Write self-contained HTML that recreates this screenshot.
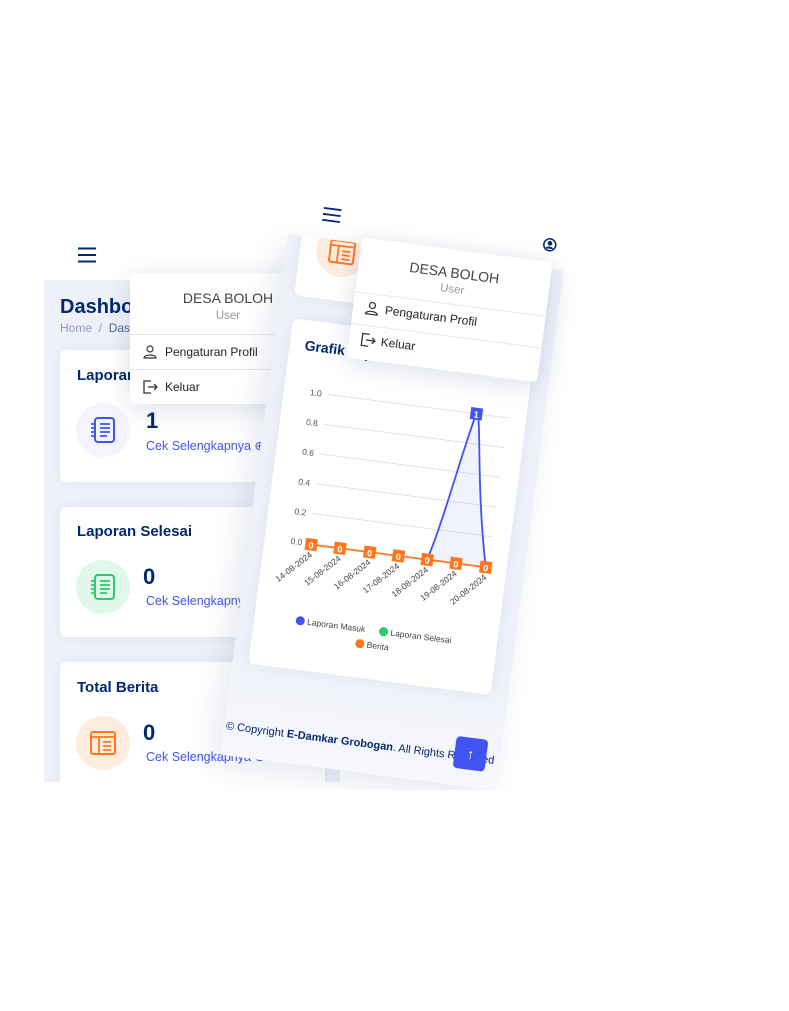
<!DOCTYPE html>
<html><head><meta charset="utf-8"><style>
*{margin:0;padding:0;box-sizing:border-box}
body{width:789px;height:1011px;background:#fff;position:relative;overflow:hidden;font-family:"Liberation Sans",sans-serif}
.abs{position:absolute}
.lp{left:44px;top:280px;width:296px;height:502px;background:#eef1f9}
.card{position:absolute;background:#fff;border-radius:6px;box-shadow:0 0 14px rgba(1,41,112,.06)}
.h5{position:absolute;color:#012970;font-size:15px;font-weight:bold}
.num{position:absolute;color:#012970;font-size:22px;font-weight:bold}
.lnk{position:absolute;color:#4154f1;font-size:12.5px;white-space:nowrap}
.circ{position:absolute;width:54px;height:54px;border-radius:50%}
.dd{position:absolute;background:#fff;border-radius:5px;box-shadow:0 5px 25px rgba(1,41,112,.14)}
.dd .n{position:absolute;width:100%;text-align:center;color:#444;font-size:14px}
.dd .u{position:absolute;width:100%;text-align:center;color:#999;font-size:11.5px}
.dd .hr{position:absolute;left:0;right:0;height:1px;background:#e6e6ee}
.dd .it{position:absolute;color:#222;font-size:12px}
</style></head><body>

<!-- left phone -->
<svg class="abs" style="left:78px;top:247px" width="18" height="16"><path d="M0 1.5H18M0 8H18M0 14.5H18" stroke="#012970" stroke-width="2"/></svg>
<div class="abs lp"></div>
<div class="abs" style="left:60px;top:296px;color:#012970;font-size:20px;font-weight:bold">Dashboard</div>
<div class="abs" style="left:60px;top:321px;color:#899bbd;font-size:12px">Home&nbsp; / &nbsp;<span style="color:#51678f">Dashboard</span></div>

<div class="card" style="left:60px;top:350px;width:265px;height:132px"></div>
<div class="h5" style="left:77px;top:367px">Laporan Masuk</div>
<div class="circ" style="left:76px;top:403px;background:#f3f4fd"></div>
<svg class="abs" style="left:89px;top:416px" width="28" height="28"><rect x="6" y="2" width="19" height="24" rx="3" fill="none" stroke="#4154f1" stroke-width="2"/><path d="M11 8h10M11 12h10M11 16h10M11 20h7M2 8h3M2 12h3M2 16h3M2 20h3" stroke="#4154f1" stroke-width="1.8"/></svg>
<div class="num" style="left:146px;top:408px">1</div>
<div class="lnk" style="left:146px;top:438px">Cek Selengkapnya ⊕</div>

<div class="card" style="left:60px;top:507px;width:265px;height:130px"></div>
<div class="h5" style="left:77px;top:523px">Laporan Selesai</div>
<div class="circ" style="left:76px;top:560px;background:#e0f8e9"></div>
<svg class="abs" style="left:89px;top:573px" width="28" height="28"><rect x="6" y="2" width="19" height="24" rx="3" fill="none" stroke="#2eca6a" stroke-width="2"/><path d="M11 8h10M11 12h10M11 16h10M11 20h7M2 8h3M2 12h3M2 16h3M2 20h3" stroke="#2eca6a" stroke-width="1.8"/></svg>
<div class="num" style="left:143px;top:564px">0</div>
<div class="lnk" style="left:146px;top:594px">Cek Selengkapnya</div>

<div class="card" style="left:60px;top:662px;width:265px;height:130px;border-radius:6px 6px 0 0"></div>
<div class="h5" style="left:77px;top:679px">Total Berita</div>
<div class="circ" style="left:76px;top:716px;background:#ffecdf"></div>
<svg class="abs" style="left:89px;top:729px" width="28" height="28"><rect x="2" y="3" width="24" height="22" rx="2" fill="none" stroke="#ff771d" stroke-width="2"/><path d="M2 8H26M10 8V25M14 13h8M14 17h8M14 21h8" stroke="#ff771d" stroke-width="1.8"/></svg>
<div class="num" style="left:143px;top:720px">0</div>
<div class="lnk" style="left:146px;top:749px">Cek Selengkapnya ⊕</div>
<div class="abs" style="left:0;top:782px;width:789px;height:229px;background:#fff"></div>

<div class="dd" style="left:130px;top:273px;width:160px;height:131px">
 <div class="n" style="top:17px;left:18px;width:160px">DESA BOLOH</div>
 <div class="u" style="top:37px;left:18px;width:160px">User</div>
 <div class="hr" style="top:61px"></div>
 <svg class="abs" style="left:13px;top:72px" width="14" height="14"><circle cx="7" cy="4" r="3" fill="none" stroke="#333" stroke-width="1.2"/><path d="M1 13c0-4 12-4 12 0z" fill="none" stroke="#333" stroke-width="1.2"/></svg>
 <div class="it" style="left:35px;top:72px">Pengaturan Profil</div>
 <div class="hr" style="top:96px"></div>
 <svg class="abs" style="left:12px;top:107px" width="16" height="14"><path d="M9 1H2v12h7M6 7h9M12 4l3 3-3 3" fill="none" stroke="#333" stroke-width="1.3"/></svg>
 <div class="it" style="left:35px;top:107px">Keluar</div>
</div>

<!-- right phone (rotated) -->
<div class="abs" style="left:288px;top:234px;width:0;height:0;transform:rotate(7.4deg);transform-origin:0 0">
 <svg class="abs" style="left:32px;top:-32px" width="18" height="15"><path d="M0 1.5H18M0 7.5H18M0 13.5H18" stroke="#012970" stroke-width="1.8"/></svg>
 <svg class="abs" style="left:254px;top:-30px" width="14" height="14"><circle cx="7" cy="7" r="6" fill="none" stroke="#012970" stroke-width="1.5"/><circle cx="7" cy="5.5" r="2.3" fill="#012970"/><path d="M3 11c1-3 7-3 8 0" fill="#012970"/></svg>
 <div class="abs" style="left:0;top:0;width:278px;height:525px;background:linear-gradient(#eef1f9 80%,#f7f8fc);box-shadow:-8px 10px 30px rgba(1,41,112,.10);overflow:hidden">
  <div class="card" style="left:14px;top:-10px;width:246px;height:70px"></div>
  <div class="circ" style="left:30px;top:-16px;width:52px;height:52px;background:#ffecdf"></div>
  <svg class="abs" style="left:42px;top:-3px" width="28" height="28"><rect x="2" y="3" width="24" height="22" rx="2" fill="none" stroke="#ff771d" stroke-width="2"/><path d="M2 8H26M10 8V25M14 13h8M14 17h8M14 21h8" stroke="#ff771d" stroke-width="1.8"/></svg>
  <div class="card" style="left:16px;top:83px;width:244px;height:348px"></div>
  <div class="abs" style="left:31px;top:100px;color:#012970;font-size:14px;font-weight:bold;white-space:nowrap">Grafik Laporan</div>
  <svg class="abs" style="left:0;top:0" width="278" height="460" font-family="Liberation Sans,sans-serif">
   <g font-size="8.5" fill="#555" text-anchor="end">
    <text x="54" y="157">1.0</text><text x="54" y="187">0.8</text><text x="54" y="217">0.6</text><text x="54" y="247">0.4</text><text x="54" y="277">0.2</text><text x="54" y="307">0.0</text>
   </g>
   <g stroke="#e3e3e3"><path d="M60 154H242M60 184H242M60 214H242M60 244H242M60 274H242"/></g>
   <path d="M180 305C192 260 203 180 210 154C215 150 218 220 239 305Z" fill="#4154f1" opacity=".08"/>
   <path d="M180 305C192 260 203 180 210 154C215 150 218 220 239 305" fill="none" stroke="#4154f1" stroke-width="1.8"/>
   <path d="M63 305H239" stroke="#ff771d" stroke-width="1.8"/>
   <g fill="#ff771d"><rect x="57" y="299" width="12" height="12"/><rect x="86" y="299" width="12" height="12"/><rect x="116" y="299" width="12" height="12"/><rect x="145" y="299" width="12" height="12"/><rect x="174" y="299" width="12" height="12"/><rect x="203" y="299" width="12" height="12"/><rect x="233" y="299" width="12" height="12"/></g>
   <rect x="204" y="148" width="12" height="12" fill="#4154f1"/>
   <g fill="#fff" font-size="9" font-weight="bold" text-anchor="middle"><text x="63" y="309">0</text><text x="92" y="309">0</text><text x="122" y="309">0</text><text x="151" y="309">0</text><text x="180" y="309">0</text><text x="209" y="309">0</text><text x="239" y="309">0</text><text x="210" y="158">1</text></g>
   <g font-size="8.5" fill="#444" text-anchor="end">
    <text transform="translate(66,316) rotate(-45)">14-08-2024</text><text transform="translate(95,316) rotate(-45)">15-08-2024</text><text transform="translate(125,316) rotate(-45)">16-08-2024</text><text transform="translate(154,316) rotate(-45)">17-08-2024</text><text transform="translate(183,316) rotate(-45)">18-08-2024</text><text transform="translate(212,316) rotate(-45)">19-08-2024</text><text transform="translate(242,316) rotate(-45)">20-08-2024</text>
   </g>
   <g font-size="8.5" fill="#444">
    <circle cx="62" cy="382" r="4.5" fill="#4154f1"/><text x="69" y="385">Laporan Masuk</text>
    <circle cx="146" cy="382" r="4.5" fill="#2eca6a"/><text x="153" y="385">Laporan Selesai</text>
    <circle cx="124" cy="397" r="4.5" fill="#ff771d"/><text x="131" y="400">Berita</text>
   </g>
   <path d="M4 484H275" stroke="#cfd9f5"/>
  </svg>
  <div class="abs" style="left:2px;top:490px;font-size:11px;color:#012970;white-space:nowrap">© Copyright <b>E-Damkar Grobogan</b>. All Rights Reserved</div>
  <div class="abs" style="left:232px;top:476px;width:32px;height:32px;background:#4154f1;border-radius:4px;color:#fff;text-align:center;line-height:32px;font-size:14px">↑</div>
 </div>
 <div class="dd" style="left:74px;top:-6px;width:192px;height:121px">
  <div class="n" style="top:15px">DESA BOLOH</div>
  <div class="u" style="top:34px">User</div>
  <div class="hr" style="top:54px"></div>
  <svg class="abs" style="left:12px;top:62px" width="14" height="14"><circle cx="7" cy="4" r="3" fill="none" stroke="#333" stroke-width="1.2"/><path d="M1 13c0-4 12-4 12 0z" fill="none" stroke="#333" stroke-width="1.2"/></svg>
  <div class="it" style="left:32px;top:62px">Pengaturan Profil</div>
  <div class="hr" style="top:86px"></div>
  <svg class="abs" style="left:11px;top:94px" width="16" height="14"><path d="M9 1H2v12h7M6 7h9M12 4l3 3-3 3" fill="none" stroke="#333" stroke-width="1.3"/></svg>
  <div class="it" style="left:32px;top:94px">Keluar</div>
 </div>
</div>
<div class="abs" style="left:0;top:790px;width:789px;height:221px;background:#fff"></div>
</body></html>
